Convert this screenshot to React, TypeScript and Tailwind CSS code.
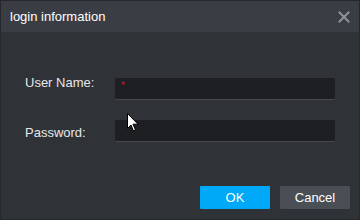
import React from "react";

export default function App() {
  return (
    <div className="w-[360px] h-[220px] bg-[#2f3236] border border-[#26282c] flex flex-col relative font-['Liberation_Sans',Arial,sans-serif] text-[13px] text-[#e6e8ea] overflow-hidden">
      <div className="h-[31px] bg-[#3a3d43] flex items-center justify-between pl-[9px] pr-[9px] shrink-0">
        <span className="text-[13px] text-white">login information</span>
        <svg width="12" height="12" viewBox="0 0 12 12" className="mt-[1px]">
          <path d="M1.5 1.5 L10.5 10.5 M10.5 1.5 L1.5 10.5" stroke="#8e9299" strokeWidth="2" strokeLinecap="square" />
        </svg>
      </div>
      <div className="flex-1 flex flex-col pt-[46px] pl-[24px] pr-[24px]">
        <div className="flex items-start">
          <label className="w-[90px] leading-[13px] mt-[-2px]">User Name:</label>
          <div className="w-[220px] h-[22px] bg-[#1e1f23] rounded-[2px] border-b border-[#45484d] relative">
            <span className="absolute left-[6px] top-[3px] text-[#d0161b] text-[10px] leading-[10px]">*</span>
          </div>
        </div>
        <div className="flex items-start mt-[20px]">
          <label className="w-[90px] leading-[13px] mt-[6px]">Password:</label>
          <div className="w-[220px] h-[22px] bg-[#1e1f23] rounded-[2px] border-b border-[#45484d]" />
        </div>
        <div className="flex justify-end gap-[10px] mt-[44px] mr-[-15px]">
          <button className="w-[70px] h-[23px] bg-[#00a9f7] text-white text-[13px] rounded-[1px]">OK</button>
          <button className="w-[70px] h-[23px] bg-[#4a4f56] text-white text-[13px] rounded-[1px]">Cancel</button>
        </div>
      </div>
      <svg className="absolute left-[126px] top-[112px]" width="12" height="19" viewBox="0 0 12 19">
        <path d="M0.5 0.5 L0.5 15.5 L4 12 L6.5 18 L8.5 17 L6 11.2 L11 11.2 Z" fill="#fff" stroke="#000" strokeWidth="1" />
      </svg>
    </div>
  );
}
